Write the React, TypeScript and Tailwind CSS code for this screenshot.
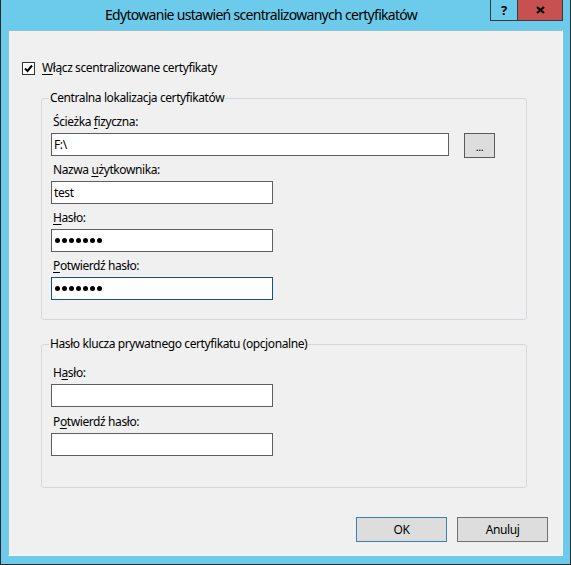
import type { ReactNode } from 'react'

function Label({ children, className }: { children: ReactNode; className?: string }) {
  return <div className={['h-4 pl-[2px] leading-4', className ?? ''].join(' ')}>{children}</div>
}

function TextBox({
  children,
  className,
  focused,
}: {
  children?: ReactNode
  className?: string
  focused?: boolean
}) {
  return (
    <div
      className={[
        'mt-[3px] flex h-[23px] items-center border bg-white pl-[2px]',
        focused ? 'border-[#1b4f80]' : 'border-[#5e5e5e]',
        className ?? 'w-[222px]',
      ].join(' ')}
    >
      {children}
    </div>
  )
}

function Dots() {
  return (
    <div className="flex items-center gap-[2px] pl-[1px]">
      {[0, 1, 2, 3, 4, 5, 6].map((i) => (
        <span key={i} className="h-[5px] w-[5px] rounded-full bg-black" />
      ))}
    </div>
  )
}

function Key({ children }: { children: ReactNode }) {
  return <span className="underline underline-offset-2">{children}</span>
}

export default function App() {
  return (
    <div className="flex h-[565px] w-[571px] flex-col border-x border-b border-[#2b2b2b] bg-[#6ccbea] font-['Noto_Sans',sans-serif] text-[12px] tracking-[-0.4px] text-black">
      <div className="flex h-[30px] shrink-0">
        <div className="flex-1 pl-[104px] pt-[5px] text-[14px] leading-5 tracking-[-0.7px]">
          Edytowanie ustawień scentralizowanych certyfikatów
        </div>
        <div className="flex h-[21px] w-[28px] items-center justify-center border-x border-b border-[#3a3a3a] text-[13px] font-bold leading-none">
          ?
        </div>
        <div className="mr-[7px] flex h-[21px] w-[45px] items-center justify-center border-r border-b border-[#3a3a3a] bg-[#c75050]">
          <svg width="9" height="8" viewBox="0 0 9 8">
            <path d="M1 1 L8 7 M8 1 L1 7" stroke="#000" strokeWidth="2.2" />
          </svg>
        </div>
      </div>

      <div className="mx-[7px] h-[526px] border border-t-[#8fc2d6] border-l-[#8fc2d6] border-r-[#f8f8f8] border-b-[#f8f8f8] bg-[#f0f0f0] pt-[29px]">
        <div className="ml-[13px] flex h-4 items-center">
          <div className="flex h-[13px] w-[13px] items-center justify-center border border-[#333] bg-white">
            <svg width="9" height="9" viewBox="0 0 9 9">
              <path d="M1 4.5 L3.5 7 L8 1.5" fill="none" stroke="#000" strokeWidth="2" />
            </svg>
          </div>
          <span className="ml-[7px] leading-4">
            <Key>W</Key>łącz scentralizowane certyfikaty
          </span>
        </div>

        <fieldset className="ml-[32px] mt-[14px] w-[486px] rounded-[3px] border border-[#d3d8dc] pb-[19px] pl-[7px] pr-0 pt-[8px]">
          <legend className="px-[1px] leading-4">Centralna lokalizacja certyfikatów</legend>
          <div className="pl-[2px]">
            <Label>
              Ścieżka <Key>f</Key>izyczna:
            </Label>
            <div className="mt-[3px] flex items-start">
              <div className="flex h-[23px] w-[398px] items-center border border-[#5e5e5e] bg-white pl-[2px]">
                F:\
              </div>
              <button className="ml-[15px] flex h-[25px] w-[31px] items-center justify-center border border-[#5a5a5a] bg-[#dddddd] pt-[2px] text-[11px] leading-none">
                ...
              </button>
            </div>
            <Label className="mt-[4px]">
              Nazwa <Key>u</Key>żytkownika:
            </Label>
            <TextBox>test</TextBox>
            <Label className="mt-[6px]">
              <Key>H</Key>asło:
            </Label>
            <TextBox>
              <Dots />
            </TextBox>
            <Label className="mt-[6px]">
              <Key>P</Key>otwierdź hasło:
            </Label>
            <TextBox focused>
              <Dots />
            </TextBox>
          </div>
        </fieldset>

        <fieldset className="ml-[32px] mt-[16px] w-[486px] rounded-[3px] border border-[#d3d8dc] pb-[31px] pl-[7px] pr-0 pt-[13px]">
          <legend className="px-[1px] leading-4">Hasło klucza prywatnego certyfikatu (opcjonalne)</legend>
          <div className="pl-[2px]">
            <Label>
              H<Key>a</Key>sło:
            </Label>
            <TextBox />
            <Label className="mt-[7px]">
              P<Key>o</Key>twierdź hasło:
            </Label>
            <TextBox />
          </div>
        </fieldset>

        <div className="mt-[29px] flex justify-end gap-[10px] pr-[14px]">
          <button className="h-[25px] w-[91px] border border-[#3c7fb1] bg-[#dddddd] leading-4">OK</button>
          <button className="h-[25px] w-[91px] border border-[#707070] bg-[#dddddd] leading-4">Anuluj</button>
        </div>
      </div>
    </div>
  )
}
